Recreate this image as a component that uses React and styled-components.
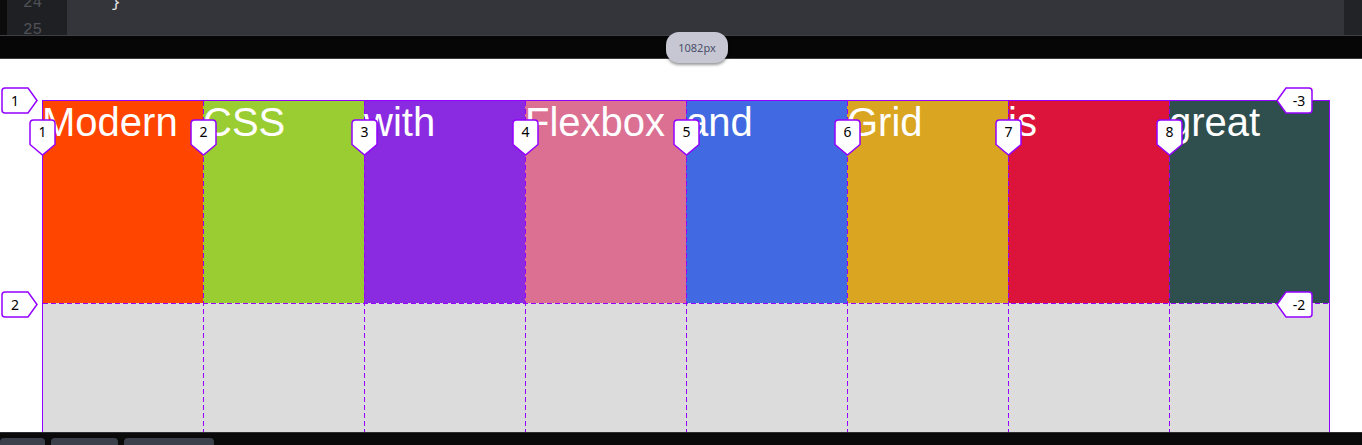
import React from "react";
import styled, { createGlobalStyle } from "styled-components";

const PURPLE = "#9400ff";

const words = [
  { text: "Modern", color: "#ff4500" },
  { text: "CSS", color: "#9acd32" },
  { text: "with", color: "#8a2be2" },
  { text: "Flexbox", color: "#db7093" },
  { text: "and", color: "#4169e1" },
  { text: "Grid", color: "#daa520" },
  { text: "is", color: "#dc143c" },
  { text: "great", color: "#2f4f4f" },
];

const COL = 161;
const ROW = 203;

const GlobalStyle = createGlobalStyle`
  html, body {
    margin: 0;
    padding: 0;
    height: 100%;
    overflow: hidden;
    background: #fff;
  }
  #root {
    height: 100%;
  }
`;

const Shell = styled.div`
  display: flex;
  flex-direction: column;
  height: 100vh;
  width: 100%;
`;

/* ---- code editor strip ---- */
const Editor = styled.div`
  display: flex;
  height: 35px;
  flex-shrink: 0;
  background: #34353a;
  border-bottom: 1px solid #3e3f44;
  overflow: hidden;
  font-family: "Liberation Mono", "DejaVu Sans Mono", monospace;
  font-size: 16px;
  line-height: 27px;
`;

const EdgeStrip = styled.div`
  width: 7px;
  background: #0c0c0d;
`;

const Gutter = styled.div`
  width: 60px;
  background: #1f2023;
  color: #505157;
  padding-left: 16px;
  box-sizing: border-box;
`;

const Lines = styled.div`
  margin-top: -10px;
`;

const Code = styled.div`
  flex: 1;
  color: #e4e4e6;
  padding-left: 44px;
`;

const ScrollTrack = styled.div`
  width: 18px;
  background: #222327;
`;

/* ---- responsive resize bar ---- */
const ResizeBar = styled.div`
  position: relative;
  height: 22px;
  flex-shrink: 0;
  background: #060606;
  border-bottom: 1px solid #3a3b3e;
`;

const SizePill = styled.div`
  position: absolute;
  left: 666px;
  top: -4px;
  width: 62px;
  height: 31px;
  border-radius: 13px;
  background: #c6c7d2;
  box-shadow: 0 2px 3px rgba(0, 0, 0, 0.4);
  display: flex;
  align-items: center;
  justify-content: center;
  font-family: "Noto Sans", "Liberation Sans", sans-serif;
  font-size: 11px;
  color: #4a4f6b;
  z-index: 2;
`;

/* ---- preview ---- */
const Preview = styled.div`
  flex: 1;
  background: #fff;
  overflow: hidden;
  padding: 41px 0 0 42px;
`;

const GridArea = styled.div`
  position: relative;
  width: ${COL * 8}px;
`;

const Grid = styled.div`
  display: grid;
  grid-template-columns: repeat(8, 1fr);
  grid-template-rows: ${ROW}px ${ROW}px;
  background: #dcdcdc;
`;

const Cell = styled.div`
  background: ${(p) => p.$color};
  color: #fff;
  font-family: "Liberation Sans", Arial, sans-serif;
  font-size: 40px;
  line-height: normal;
`;

const Overlay = styled.div`
  position: absolute;
  inset: 0;
  border: 1px solid ${PURPLE};
  pointer-events: none;
`;

const DashV = styled.div`
  position: absolute;
  top: 0;
  bottom: 0;
  left: ${(p) => p.$x}px;
  width: 1px;
  background: repeating-linear-gradient(
    to bottom,
    ${PURPLE} 0 5px,
    transparent 5px 8px
  );
`;

const DashH = styled.div`
  position: absolute;
  left: 0;
  right: 0;
  top: ${(p) => p.$y}px;
  height: 1px;
  background: repeating-linear-gradient(
    to right,
    ${PURPLE} 0 5px,
    transparent 5px 8px
  );
`;

const Tag = styled.div`
  position: absolute;
  left: ${(p) => p.$x}px;
  top: ${(p) => p.$y}px;
  width: ${(p) => p.$w}px;
  height: ${(p) => p.$h}px;

  svg {
    display: block;
  }
`;

const TagText = styled.span`
  position: absolute;
  top: 0;
  left: ${(p) => p.$l}px;
  width: ${(p) => p.$w}px;
  height: ${(p) => p.$h}px;
  display: flex;
  align-items: center;
  justify-content: center;
  font-family: "Noto Sans", "DejaVu Sans", sans-serif;
  font-size: 14px;
  color: #000;
`;

function ColLabel({ n, x }) {
  return (
    <Tag $x={x - 13} $y={19} $w={27} $h={37}>
      <svg width="27" height="37" viewBox="0 0 27 37">
        <path
          d="M1 4.5Q1 1 4.5 1H22.5Q26 1 26 4.5V25.5L13.5 36L1 25.5Z"
          fill="#fff"
          stroke={PURPLE}
          strokeWidth="1.5"
        />
      </svg>
      <TagText $l={0} $w={27} $h={25}>{n}</TagText>
    </Tag>
  );
}

function RowLabel({ n, y, x, side }) {
  const left = side === "left";
  return (
    <Tag $x={left ? x - 36 : x} $y={y - 13.5} $w={37} $h={27}>
      <svg width="37" height="27" viewBox="0 0 37 27">
        <path
          d={
            left
              ? "M4 1H27L36 13.5L27 26H4Q1 26 1 23V4Q1 1 4 1Z"
              : "M33 1H10L1 13.5L10 26H33Q36 26 36 23V4Q36 1 33 1Z"
          }
          fill="#fff"
          stroke={PURPLE}
          strokeWidth="1.5"
        />
      </svg>
      <TagText $l={left ? 1 : 10} $w={26} $h={27}>{n}</TagText>
    </Tag>
  );
}

/* ---- bottom tab strip ---- */
const TabBar = styled.div`
  height: 12px;
  flex-shrink: 0;
  background: #0a0a0b;
  border-top: 1px solid #2d2e31;
  display: flex;
  align-items: flex-end;
  gap: 6px;
  overflow: hidden;
`;

const Tab = styled.div`
  width: ${(p) => p.$w}px;
  height: 7px;
  background: #3c404b;
  border-radius: 4px 4px 0 0;
`;

export default function App() {
  return (
    <>
      <GlobalStyle />
      <Shell>
        <Editor>
          <EdgeStrip />
          <Gutter>
            <Lines>
              <div>24</div>
              <div>25</div>
            </Lines>
          </Gutter>
          <Code>
            <Lines>
              <div>{"}"}</div>
              <div>&nbsp;</div>
            </Lines>
          </Code>
          <ScrollTrack />
        </Editor>

        <ResizeBar>
          <SizePill>1082px</SizePill>
        </ResizeBar>

        <Preview>
          <GridArea>
            <Grid>
              {words.map((w) => (
                <Cell key={w.text} $color={w.color}>
                  {w.text}
                </Cell>
              ))}
            </Grid>
            <Overlay>
              {[1, 2, 3, 4, 5, 6, 7].map((k) => (
                <DashV key={k} $x={COL * k - 1} />
              ))}
              <DashH $y={ROW - 1} />
            </Overlay>
            {words.map((w, i) => (
              <ColLabel key={w.text} n={i + 1} x={COL * i} />
            ))}
            <RowLabel n="1" side="left" x={-5} y={0} />
            <RowLabel n="2" side="left" x={-5} y={ROW + 1} />
            <RowLabel n="-3" side="right" x={COL * 8 - 54} y={0} />
            <RowLabel n="-2" side="right" x={COL * 8 - 54} y={ROW + 1} />
          </GridArea>
        </Preview>

        <TabBar>
          <Tab $w={45} />
          <Tab $w={67} />
          <Tab $w={90} />
        </TabBar>
      </Shell>
    </>
  );
}
